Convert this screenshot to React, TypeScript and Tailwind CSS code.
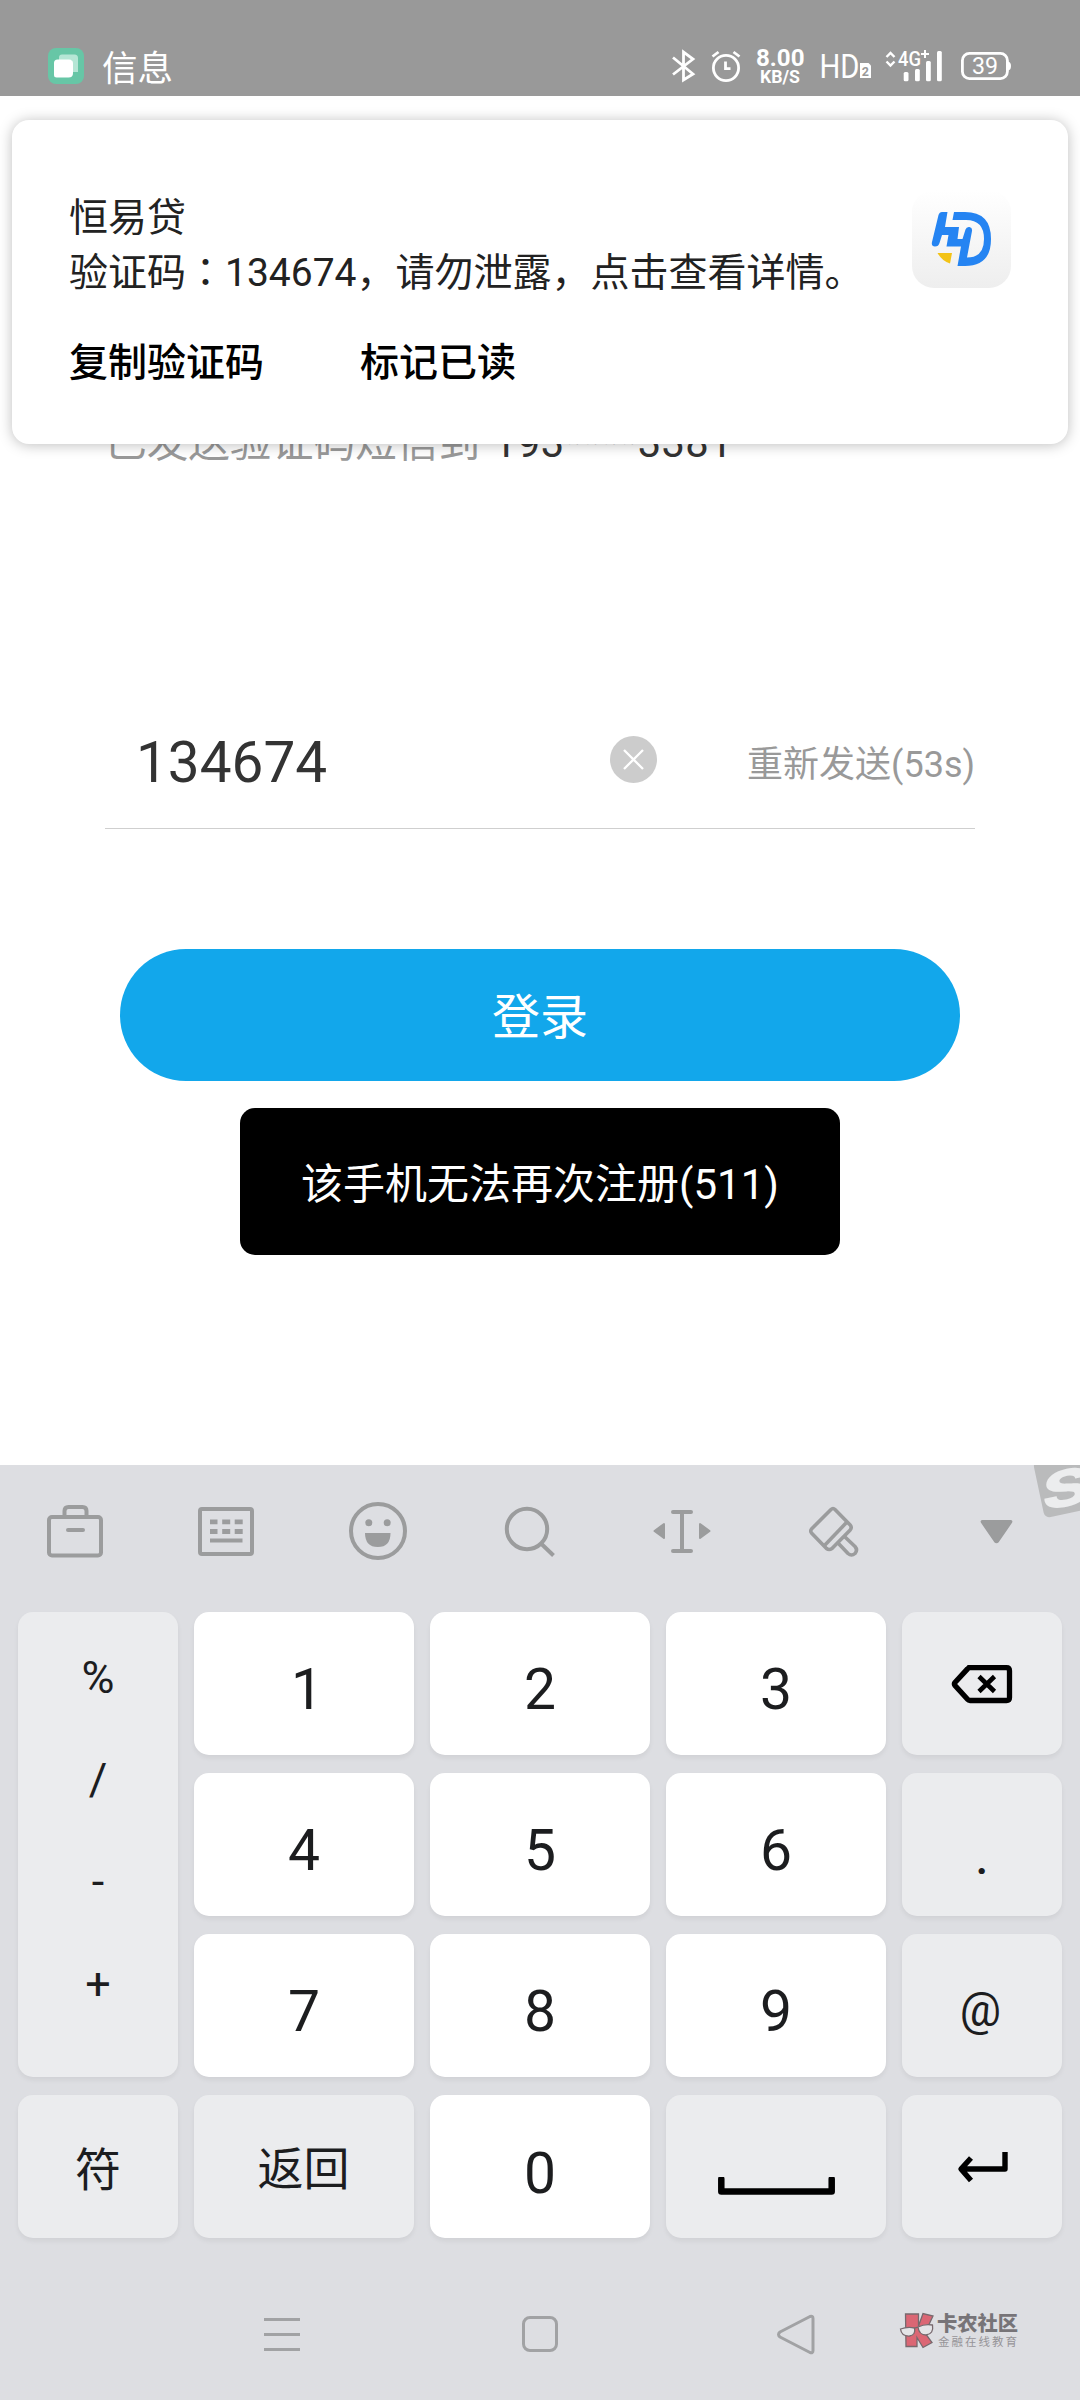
import type { ReactNode } from "react";

const cjk = "font-[Roboto,'Noto_Sans_CJK_SC',sans-serif]";

function StatusBar() {
  return (
    <header className="flex h-[96px] shrink-0 items-end bg-[#999999] pb-[12px] pl-12 text-white">
      <svg className="h-9 w-9" viewBox="0 0 36 36">
        <rect width="36" height="36" rx="8" fill="#67c6a6" />
        <path d="M14 6.5h12.500a3.500 3.500 0 0 1 3.500 3.500v14h-6V12h-13V9.500a3 3 0 0 1 3-3Z" fill="#b5e6d5" />
        <path d="M9.500 11.500H21a4 4 0 0 1 4 4V25q0 4.500-4.500 4.500H8.500a2.500 2.500 0 0 1-2.500-2.500V15a3.500 3.500 0 0 1 3.500-3.500Z" fill="#fff" />
      </svg>
      <span className="-mb-[3px] ml-[18px] text-[35.500px] leading-[36px]">信息</span>
      <svg className="-mb-2 ml-auto mr-[66px] h-[52px] w-[346px]" viewBox="668 40 346 52" fill="none" stroke="#fff" fontFamily="Roboto, sans-serif">
        <path d="M673 57.500 693 74 683.500 80V52L693 59 673 74.500" strokeWidth="2.800" />
        <circle cx="726" cy="68" r="12.600" strokeWidth="2.800" />
        <path d="M712.500 56.500l6-4.500M739.500 56.500l-6-4.500M725.500 61.500v7.200h5" strokeWidth="2.800" />
        <text x="756" y="66" fontSize="24.500" fontWeight="700" fill="#fff" stroke="none" textLength="48.500" lengthAdjust="spacingAndGlyphs">8.00</text>
        <text x="760" y="83" fontSize="18" fontWeight="700" fill="#fff" stroke="none" textLength="40" lengthAdjust="spacingAndGlyphs">KB/S</text>
        <text x="819.500" y="78" fontSize="33.500" fontWeight="400" fill="#fff" stroke="none" textLength="40" lengthAdjust="spacingAndGlyphs">HD</text>
        <path d="M860 63h8.500l2.500 2.500V78h-11Z" fill="#fff" stroke="none" />
        <text x="861.800" y="75.500" fontSize="12.500" fontWeight="700" fill="#999" stroke="none">2</text>
        <path d="m886.500 57 4-4 4 4M886.500 61.500l4 4 4-4" strokeWidth="2.400" />
        <text x="898" y="66" fontSize="20.500" fontWeight="500" fill="#fff" stroke="none" textLength="23" lengthAdjust="spacingAndGlyphs">4G</text>
        <path d="M921 54h8M925 50v8" strokeWidth="2" />
        <g fill="#fff" stroke="none">
          <rect x="903.700" y="72" width="4.800" height="9.200" rx="1.500" />
          <rect x="915" y="69" width="4.800" height="12.200" rx="1.500" />
          <rect x="926" y="61" width="4.800" height="20.200" rx="1.500" />
          <rect x="937" y="51" width="4.800" height="30.200" rx="1.500" />
        </g>
        <rect x="962.400" y="53.400" width="45" height="25.200" rx="7" strokeWidth="2.800" />
        <path d="M1008 61.500q3 .5 3 4.500t-3 4.500Z" fill="#fff" stroke="none" />
        <text x="972" y="74" fontSize="24" fontWeight="400" fill="#fff" stroke="none" textLength="26" lengthAdjust="spacingAndGlyphs">39</text>
      </svg>
    </header>
  );
}

function Notification() {
  return (
    <section className="absolute left-3 top-[24px] flex h-[324px] w-[1056px] flex-col rounded-[17px] bg-white pl-[57px] pt-[71px] text-[39px] leading-[55px] text-[#222222] shadow-[0_1px_14px_rgba(0,0,0,0.26)]">
      <p>恒易贷</p>
      <p className="whitespace-nowrap">
        验证码<span className="font-['Noto_Sans_CJK_TC'] leading-none">：</span>134674，请勿泄露，点击查看详情。
      </p>
      <div className="mt-[35px] flex gap-[96px] font-medium text-black">
        <span>复制验证码</span>
        <span>标记已读</span>
      </div>
      <svg className="absolute left-[900px] top-[70px] h-[98px] w-[99px]" viewBox="0 0 99 98">
        <defs>
          <linearGradient id="tile" x1="0" y1="0" x2="0" y2="1">
            <stop offset="0" stopColor="#ffffff" />
            <stop offset="1" stopColor="#eeeeee" />
          </linearGradient>
        </defs>
        <rect width="99" height="98" rx="22" fill="url(#tile)" />
        <path d="M30 22h5.500L33 37H47l-1.500 12H50.500l3-9.500q1-3 4-2.500 3 .5 2.500 4l-5 26.500q17 0 17-18.500 0-19-18-19H40.500l1.500-8H53q26 0 26 27 0 27-26 27H45.500l3.500-19.500H34.500l2-11.500h-6.500L27.500 53q-1 3.500-4.500 3.500-4 0-3-4.500L26.500 25Q27.500 22 30 22Z" fill="#2584f2" />
        <path d="M25.500 63h14.500l-2 10.500q-8-2.500-12.500-10.500Z" fill="#f3c316" />
      </svg>
    </section>
  );
}

function LoginPage() {
  return (
    <main className="relative flex h-[1369px] shrink-0 flex-col bg-white">
      <p className="mt-[317px] pl-[105px] text-[41.700px] leading-[60px] text-[#999999]">
        已发送验证码短信到
        <span className="ml-[13px] tracking-[0.350px] text-[#333333]">
          193<span className="text-[#bbbbbb]">****</span>3381
        </span>
      </p>
      <div className="mx-[105px] mt-[218px] flex h-[138px] items-center border-b border-[#cfcfcf] pt-[2px]">
        <span className="w-[505px] pl-[31px] pt-[5px] text-[56.700px] leading-[60px] text-[#333333]">134674</span>
        <svg className="-mt-[2px] h-[47px] w-[47px]" viewBox="0 0 47 47">
          <circle cx="23.500" cy="23.500" r="23.500" fill="#cccccc" />
          <path d="m14 14 19 19M33 14 14 33" stroke="#fff" strokeWidth="2.300" />
        </svg>
        <span className="ml-auto pt-[8px] text-[36px] leading-[44px] text-[#999999]">重新发送(53s)</span>
      </div>
      <button className="mx-[120px] mt-[120px] flex h-[132px] items-center justify-center rounded-full bg-[#12a7eb] pt-[5px] text-[48px] leading-[60px] text-white">
        登录
      </button>
      <div className="mx-auto mt-[27px] flex h-[147px] w-[600px] items-center justify-center rounded-[15px] bg-black pt-[6px] text-[42px] leading-[50px] text-white">
        该手机无法再次注册(511)
      </div>
      <Notification />
    </main>
  );
}

function Toolbar() {
  return (
    <div className="relative flex h-[147px] items-center overflow-hidden pb-[15px] pl-[40px]">
      <svg className="h-[70px] w-[1000px]" viewBox="40 1496 1000 70" fill="none" stroke="#9b9c9d" strokeWidth="4">
        <rect x="49" y="1517" width="52" height="38.500" rx="3" />
        <path d="M64.500 1517v-6q0-4 4-4h14q4 0 4 4v6" />
        <path d="M68 1530h15" strokeLinecap="round" />
        <rect x="200" y="1509" width="52" height="45" rx="2" />
        <path d="M210 1521.800h7.500m4.700 0h8m4.500 0h8M210 1531.500h7.500m4.700 0h8m4.500 0h8" strokeWidth="4.800" />
        <path d="M210 1540.500h32.500" />
        <ellipse cx="378" cy="1531" rx="27" ry="27" />
        <g fill="#9b9c9d" stroke="none">
          <circle cx="368.800" cy="1522.800" r="3.500" />
          <circle cx="387.200" cy="1522.800" r="3.500" />
          <path d="M365 1533h25.500q0 14-12.700 14T365 1533Z" />
        </g>
        <circle cx="527" cy="1529" r="20.200" />
        <path d="m541 1543.500 12.500 12" />
        <path d="M673 1512h18M673 1551h18M682 1512v39" strokeLinecap="round" />
        <path d="M654.500 1531l9.500-7v14ZM709.500 1531l-9.500-7v14Z" fill="#9b9c9d" strokeWidth="2" strokeLinejoin="round" />
        <g strokeLinejoin="round" strokeWidth="3.600">
          <path d="M831 1509.500q2-2 4 0l15.200 15.500q2 2.500 0 5l-18.200 18.500q-3 2-5.500 0L811.500 1533q-1.500-2 0-4Z" />
          <path d="m824.500 1545.500 22-23" />
          <path d="m838.500 1543.500 9.500 10q3.500 3 7 0 3-3.500 0-7l-10-9.500" />
        </g>
        <path d="M982.500 1521h28q1.500 0 .5 1.500l-13 19q-1.500 1.500-3 0l-13-19q-1-1.500 .5-1.500Z" fill="#9b9c9d" strokeWidth="2" strokeLinejoin="round" />
      </svg>
      <div className="absolute left-[1038px] top-[-12px] flex h-[58px] w-[76px] -rotate-12 items-center justify-start rounded-[6px] bg-[#babbbc]">
        <span className="block origin-left scale-x-150 pl-px pt-[7px] font-[Inter] text-[50px] font-extrabold italic leading-none text-[#ecedee]">S</span>
      </div>
    </div>
  );
}

function Key({ children, white = false, className = "" }: { children: ReactNode; white?: boolean; className?: string }) {
  return (
    <button
      className={`flex h-full items-center justify-center rounded-[15px] shadow-[0_3px_5px_rgba(0,0,0,0.06)] ${white ? "bg-white pt-[12px] text-[57px]" : "bg-[#ebecee] text-[46px]"} leading-[60px] ${className}`}
    >
      {children}
    </button>
  );
}

function Keypad() {
  return (
    <div className="mx-[18px] grid grid-cols-[160px_220px_220px_220px_160px] grid-rows-[143px_143px_143px_143px] gap-x-4 gap-y-[18px] text-[#1c1d1f]">
      <div className="row-span-3 flex flex-col items-center rounded-[15px] bg-[#ebecee] pt-[15px] text-[45px] leading-[102px] shadow-[0_3px_5px_rgba(0,0,0,0.06)]">
        <span>%</span>
        <span>/</span>
        <span>-</span>
        <span>+</span>
      </div>
      <Key white className="pl-[6px]">1</Key>
      <Key white>2</Key>
      <Key white>3</Key>
      <Key>
        <svg className="ml-[-1px] h-[40px] w-[62px]" viewBox="951 1664 62 40" fill="none" stroke="#000" strokeWidth="5.300">
          <path d="M970 1667.700h36.500q3 0 3 3v26.800q0 3-3 3H970q-1.500 0-2.500-1.200l-12.500-13.800q-1.200-1.500 0-3l12.500-13.600q1-1.200 2.500-1.200Z" />
          <path d="m979 1676.500 15.500 15M994.500 1676.500l-15.500 15" strokeWidth="4.600" />
        </svg>
      </Key>
      <Key white>4</Key>
      <Key white>5</Key>
      <Key white>6</Key>
      <Key className="pt-[26px]">
        <span className="font-medium">.</span>
      </Key>
      <Key white>7</Key>
      <Key white>8</Key>
      <Key white>9</Key>
      <Key className="pr-[3px] pt-[8px]">@</Key>
      <Key className="pt-[6px]">符</Key>
      <Key className="pr-px pt-[5px]">返回</Key>
      <Key white className="pt-[14px]">0</Key>
      <Key className="pt-[39px]">
        <svg className="h-[18px] w-[117px]" viewBox="0 0 117 18" fill="none" stroke="#000" strokeWidth="6.500">
          <path d="M3.300 2V14.500H113.700V2" strokeLinejoin="round" strokeLinecap="round" />
        </svg>
      </Key>
      <Key>
        <svg className="h-[32px] w-[51px]" viewBox="957 2151 51 32" fill="none" stroke="#000" strokeWidth="5.400">
          <path d="M1005 2152v17H961M971 2158l-10 11 10 11.500" strokeLinejoin="round" />
        </svg>
      </Key>
    </div>
  );
}

function SystemNav() {
  return (
    <nav className="flex flex-1 items-start pl-[260px] pt-[64px]">
      <svg className="h-[64px] w-[560px] shrink-0" viewBox="260 2302 560 64" fill="none" stroke="#a1a2a4" strokeWidth="3">
        <path d="M264 2319.500h36M264 2334.500h36M264 2349.500h36" />
        <rect x="523.500" y="2317.500" width="33" height="33" rx="6.500" />
        <path d="m810 2316.500-30 15.500q-3 2.500 0 5l30 15.500q3 1 3-2v-32q0-3-3-2Z" strokeLinejoin="round" />
      </svg>
      <div className="ml-[79px] mt-[9px] flex">
        <svg className="h-[38px] w-[37px]" viewBox="899 2311 37 38" stroke="#77696e" strokeWidth="1.300">
          <path d="M905.500 2314h13v12l4.500-12.500 10 2.500-8 17 7 9.500-9 5-6-10v9h-11Z" fill="#db6674" />
          <path d="M900.500 2329q7-2.500 14-1 1.500 7-5 8-8 .5-9-7ZM918 2327q7-3.500 14.500-2 1.500 9-6.500 10-7 0-8-8ZM914.500 2328l3.500-1" fill="#e4e4e7" />
        </svg>
        <div className="flex flex-col pl-px pt-px text-[#777478]">
          <span className="whitespace-nowrap text-[20.300px] font-black leading-[25px]">卡农社区</span>
          <span className="-mt-px whitespace-nowrap pl-px text-[11.500px] leading-[12px] tracking-[2px] text-[#969498]">金融在线教育</span>
        </div>
      </div>
    </nav>
  );
}

export default function App() {
  return (
    <div className={`flex h-[2400px] w-[1080px] flex-col overflow-hidden bg-[#dddee2] ${cjk}`}>
      <StatusBar />
      <LoginPage />
      <Toolbar />
      <Keypad />
      <SystemNav />
    </div>
  );
}
